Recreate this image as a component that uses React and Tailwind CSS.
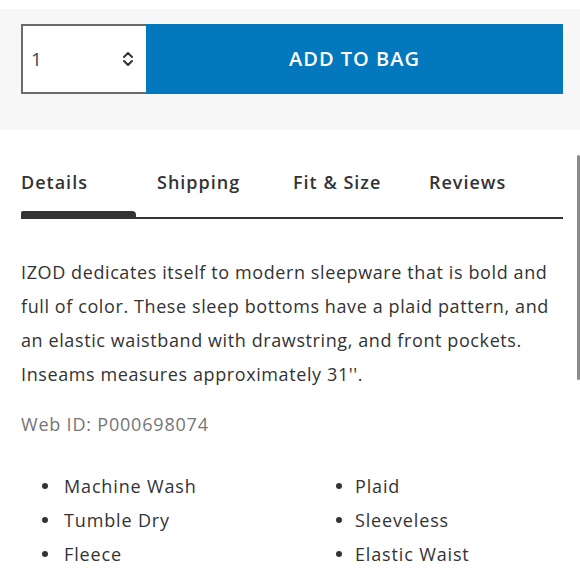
export default function App() {
  const left = ["Machine Wash", "Tumble Dry", "Fleece"];
  const right = ["Plaid", "Sleeveless", "Elastic Waist"];

  return (
    <div
      className="relative w-[580px] h-[580px] overflow-hidden bg-white text-[#333]"
      style={{ fontFamily: "'Open Sans', Lato, sans-serif" }}
    >
      {/* Add to bag bar */}
      <div className="mt-[9px] h-[121px] bg-[#f7f7f7] pt-[15px] px-[21px] pr-[17px]">
        <div className="flex h-[70px]">
          <div className="flex w-[125px] items-center justify-between border-2 border-r-0 border-[#6b6b6b] bg-white pl-[8px] pr-[12px]">
            <span className="text-[19px] font-normal text-[#444]">1</span>
            <svg width="12" height="16" viewBox="0 0 12 16" fill="none" stroke="#333" strokeWidth="2" strokeLinecap="round" strokeLinejoin="round">
              <path d="M2 6 L6 2 L10 6" />
              <path d="M2 10 L6 14 L10 10" />
            </svg>
          </div>
          <button className="flex flex-1 items-center justify-center bg-[#0378bd] text-[20px] font-semibold tracking-[1px] text-white">
            ADD TO BAG
          </button>
        </div>
      </div>

      {/* Tabs */}
      <div className="px-[21px] pr-[17px] pt-[39px]">
        <div className="flex h-[26px] items-center text-[18px] font-semibold tracking-[1px]">
          <span className="w-[136px]">Details</span>
          <span className="w-[136px]">Shipping</span>
          <span className="w-[136px]">Fit &amp; Size</span>
          <span>Reviews</span>
        </div>
        <div className="relative mt-[16px] h-[8px]">
          <div className="absolute left-0 top-0 h-[8px] w-[115px] rounded-tl-[2px] rounded-tr-[4px] bg-[#333]" />
          <div className="absolute bottom-0 left-0 right-0 h-[2px] bg-[#333]" />
        </div>
      </div>

      {/* Description */}
      <div className="px-[21px] pr-[17px] pt-[36px]">
        <p className="whitespace-nowrap text-[18px] leading-[34px] tracking-[0.6px]">
          IZOD dedicates itself to modern sleepware that is bold and
          <br />
          full of color. These sleep bottoms have a plaid pattern, and
          <br />
          an elastic waistband with drawstring, and front pockets.
          <br />
          Inseams measures approximately 31''.
        </p>
        <p className="mt-[16px] text-[18px] leading-[34px] tracking-[0.8px] text-[#757575]">Web ID: P000698074</p>

        <div className="mt-[28px] grid grid-cols-2 text-[18px] leading-[34px] tracking-[0.85px]">
          <ul>
            {left.map((t) => (
              <li key={t} className="flex items-center pl-[21px]">
                <span className="mr-[16px] h-[6px] w-[6px] rounded-full bg-[#333]" />
                {t}
              </li>
            ))}
          </ul>
          <ul>
            {right.map((t) => (
              <li key={t} className="flex items-center pl-[44px]">
                <span className="mr-[13px] h-[6px] w-[6px] rounded-full bg-[#333]" />
                {t}
              </li>
            ))}
          </ul>
        </div>
      </div>

      {/* scrollbar */}
      <div className="absolute right-0 top-[155px] h-[225px] w-[3px] rounded-full bg-[#8a8a8a]" />
    </div>
  );
}
